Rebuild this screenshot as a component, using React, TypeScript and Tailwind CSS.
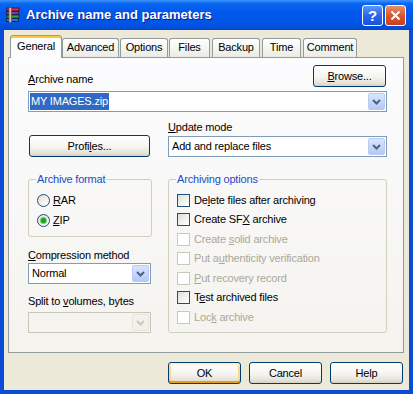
import React from 'react'

function U({ children }: { children: React.ReactNode }) {
  return <span className="underline decoration-1 underline-offset-[1px]">{children}</span>
}

function Chevron({ disabled }: { disabled?: boolean }) {
  return (
    <svg width="9" height="6" viewBox="0 0 9 6">
      <path d="M1 1 L4.5 4.5 L8 1" fill="none" stroke={disabled ? '#C9C7BA' : '#4D6185'} strokeWidth="2" />
    </svg>
  )
}

function Combo({ value, selected, disabled, className = '' }: { value?: string; selected?: boolean; disabled?: boolean; className?: string }) {
  return (
    <div
      className={`h-[21px] flex border p-px ${disabled ? 'border-[#C9C7BA] bg-[#F5F4EF]' : 'border-[#7F9DB9] bg-white'} ${className}`}
    >
      <div className="flex-1 flex items-stretch">
        {value && (
          <span className={`flex items-center ${selected ? 'bg-[#316AC5] text-white px-[1px]' : 'pl-[2px]'}`}>{value}</span>
        )}
      </div>
      <div
        className={`w-[17px] rounded-[2px] border flex items-center justify-center ${
          disabled
            ? 'border-[#E5E3DA] bg-[#F2F1EB]'
            : 'border-[#B9CBF3] bg-[linear-gradient(180deg,#D9E5FD_0%,#C3D4FA_60%,#B4C8F5_100%)]'
        }`}
      >
        <Chevron disabled={disabled} />
      </div>
    </div>
  )
}

function Btn({ children, className = '', hot }: { children: React.ReactNode; className?: string; hot?: boolean }) {
  return (
    <div
      className={`h-[22px] rounded-[3px] border border-[#003C74] flex items-center justify-center bg-[linear-gradient(180deg,#FFFFFF_0%,#F5F4EF_55%,#E6E3D8_85%,#D6D0C5_100%)] ${
        hot
          ? 'shadow-[inset_0_-2px_0_#E5A01A,inset_0_2px_0_#FFF0CF,inset_2px_0_0_#FBD88C,inset_-2px_0_0_#FBD88C]'
          : ''
      } ${className}`}
    >
      {children}
    </div>
  )
}

function Check({ disabled }: { disabled?: boolean }) {
  return (
    <div
      className={`w-[13px] h-[13px] shrink-0 border ${
        disabled ? 'border-[#CAC8BB] bg-white' : 'border-[#1C5180] bg-[linear-gradient(135deg,#DCDCD7_0%,#F3F3F1_60%,#FFFFFF_100%)]'
      }`}
    />
  )
}

function Radio({ checked }: { checked?: boolean }) {
  return (
    <div className="w-[13px] h-[13px] shrink-0 rounded-full border border-[#1C5180] bg-[linear-gradient(135deg,#DCDCD7_0%,#F3F3F1_60%,#FFFFFF_100%)] flex items-center justify-center">
      {checked && <div className="w-[5px] h-[5px] rounded-full bg-[#21A121] shadow-[0_0_0_1px_#6FCB6F]" />}
    </div>
  )
}

function RarIcon() {
  return (
    <svg width="16" height="16" viewBox="0 0 16 16">
      <rect x="2" y="1" width="12" height="3" fill="#D62A6A" stroke="#3A1020" strokeWidth="0.8" />
      <rect x="1.5" y="4.5" width="12" height="3" fill="#7A3FB8" stroke="#24103A" strokeWidth="0.8" />
      <rect x="2" y="8" width="12" height="3" fill="#35A24A" stroke="#0F3016" strokeWidth="0.8" />
      <rect x="1.5" y="11.5" width="12" height="3" fill="#2F6FD8" stroke="#0E2248" strokeWidth="0.8" />
      <rect x="4" y="0.5" width="2.5" height="15" fill="#D8C49A" stroke="#5A4A2A" strokeWidth="0.6" />
    </svg>
  )
}

const tabs = [
  { label: 'General', cls: 'w-[52px]', active: true },
  { label: 'Advanced', cls: 'w-[57px]' },
  { label: 'Options', cls: 'w-[48px] ml-[1px]' },
  { label: 'Files', cls: 'w-[41px] ml-[1px]' },
  { label: 'Backup', cls: 'w-[48px] ml-[2px]' },
  { label: 'Time', cls: 'w-[39px] ml-[2px]' },
  { label: 'Comment', cls: 'w-[54px] ml-[2px]' },
]

const options = [
  { label: <>De<U>l</U>ete files after archiving</>, dis: false, h: 'h-[20px]' },
  { label: <>Create SF<U>X</U> archive</>, dis: false, h: 'h-[19px]' },
  { label: <>Create <U>s</U>olid archive</>, dis: true, h: 'h-[20px]' },
  { label: <>Put a<U>u</U>thenticity verification</>, dis: true, h: 'h-[19px]' },
  { label: <><U>P</U>ut recovery record</>, dis: true, h: 'h-[20px]' },
  { label: <>T<U>e</U>st archived files</>, dis: false, h: 'h-[19px]' },
  { label: <>Loc<U>k</U> archive</>, dis: true, h: 'h-[20px]' },
]

export default function App() {
  return (
    <div className="w-[413px] h-[394px] flex flex-col bg-[#0A4BD8] font-['Liberation_Sans',Arial,sans-serif] text-[11px] leading-[13px] text-black">
      {/* title bar */}
      <div className="h-[30px] flex items-center pl-[5px] pr-[7px] bg-[linear-gradient(180deg,#3D95FF_0%,#0A66F0_12%,#0058EE_40%,#0055E5_80%,#0047CF_100%)]">
        <RarIcon />
        <div className="ml-[5px] flex-1 text-white font-bold text-[13px] leading-[16px] [text-shadow:1px_1px_0_#0A1E8C]">
          Archive name and parameters
        </div>
        <div className="w-[21px] h-[21px] rounded-[3px] border border-white bg-[linear-gradient(180deg,#5E96FB_0%,#2B66EA_50%,#1A52DA_100%)] flex items-center justify-center text-white font-bold text-[15px]">
          ?
        </div>
        <div className="ml-[2px] w-[21px] h-[21px] rounded-[3px] border border-white bg-[linear-gradient(180deg,#E88F6E_0%,#D9562F_50%,#C6401D_100%)] flex items-center justify-center">
          <svg width="11" height="11" viewBox="0 0 11 11">
            <path d="M1.5 1.5 L9.5 9.5 M9.5 1.5 L1.5 9.5" stroke="white" strokeWidth="2" />
          </svg>
        </div>
      </div>

      {/* client area */}
      <div className="flex-1 mx-[4px] mb-[4px] bg-[#ECE9D8] pl-[4px] pr-[5px] flex flex-col tracking-[-0.18px]">
        {/* tabs */}
        <div className="mt-[5px] h-[22px] flex items-end pl-[2px]">
          {tabs.map((t) =>
            t.active ? (
              <div
                key={t.label}
                className={`${t.cls} h-[23px] -mb-px relative z-10 border border-[#919B9C] border-b-0 border-t-[#E68B2C] rounded-t-[3px] bg-[#FCFCFE] shadow-[inset_0_2px_0_#FFC73C] text-center pt-[4px]`}
              >
                {t.label}
              </div>
            ) : (
              <div
                key={t.label}
                className={`${t.cls} h-[19px] border border-[#919B9C] border-b-0 rounded-t-[3px] bg-[linear-gradient(180deg,#FFFFFF_0%,#F3F3EF_60%,#ECEBE6_100%)] text-center pt-[2px]`}
              >
                {t.label}
              </div>
            )
          )}
        </div>

        {/* panel */}
        <div className="h-[296px] border border-[#919B9C] bg-[linear-gradient(180deg,#FCFCFE_0%,#F4F3EE_100%)] pl-[19px] pr-[16px] pt-[7px]">
          <div className="h-[22px] flex items-end justify-between">
            <div className="mb-px">
              <U>A</U>rchive name
            </div>
            <Btn className="w-[73px] mr-px">
              <span>
                <U>B</U>rowse...
              </span>
            </Btn>
          </div>
          <Combo className="mt-[4px]" value="MY IMAGES.zip" selected />

          <div className="flex gap-[16px]">
            {/* left column */}
            <div className="w-[124px] flex flex-col">
              <Btn className="mt-[23px] ml-px w-[121px]">
                <span>
                  Profi<U>l</U>es...
                </span>
              </Btn>
              <fieldset className="mt-[16px] border border-[#D0D0BF] rounded-[3px] pb-[6px]">
                <legend className="ml-[7px] px-px leading-[12px] text-[#1D4BC9]">Archive format</legend>
                <div className="pt-[5px] pl-[8px]">
                  <div className="h-[20px] flex items-center gap-[3px]">
                    <Radio />
                    <span>
                      <U>R</U>AR
                    </span>
                  </div>
                  <div className="h-[20px] flex items-center gap-[3px]">
                    <Radio checked />
                    <span>
                      <U>Z</U>IP
                    </span>
                  </div>
                </div>
              </fieldset>
              <div className="mt-[12px]">
                <U>C</U>ompression method
              </div>
              <Combo className="mt-px w-[123px]" value="Normal" />
              <div className="mt-[11px]">
                Split to <U>v</U>olumes, bytes
              </div>
              <Combo className="mt-[4px] w-[123px]" disabled />
            </div>

            {/* right column */}
            <div className="flex-1 flex flex-col">
              <div className="mt-[9px]">
                <U>U</U>pdate mode
              </div>
              <Combo className="mt-[2px]" value="Add and replace files" />
              <fieldset className="mt-[16px] border border-[#D0D0BF] rounded-[3px] pb-[5px]">
                <legend className="ml-[7px] px-px leading-[12px] text-[#1D4BC9]">Archiving options</legend>
                <div className="pt-[5px] pl-[8px]">
                  {options.map((o, i) => (
                    <div key={i} className={`${o.h} flex items-center gap-[4px] ${o.dis ? 'text-[#ACA899]' : ''}`}>
                      <Check disabled={o.dis} />
                      <span>{o.label}</span>
                    </div>
                  ))}
                </div>
              </fieldset>
            </div>
          </div>
        </div>

        {/* dialog buttons */}
        <div className="mt-[9px] mr-px flex justify-end gap-[8px]">
          <Btn className="w-[73px]" hot>
            OK
          </Btn>
          <Btn className="w-[73px]">Cancel</Btn>
          <Btn className="w-[73px]">Help</Btn>
        </div>
      </div>
    </div>
  )
}
